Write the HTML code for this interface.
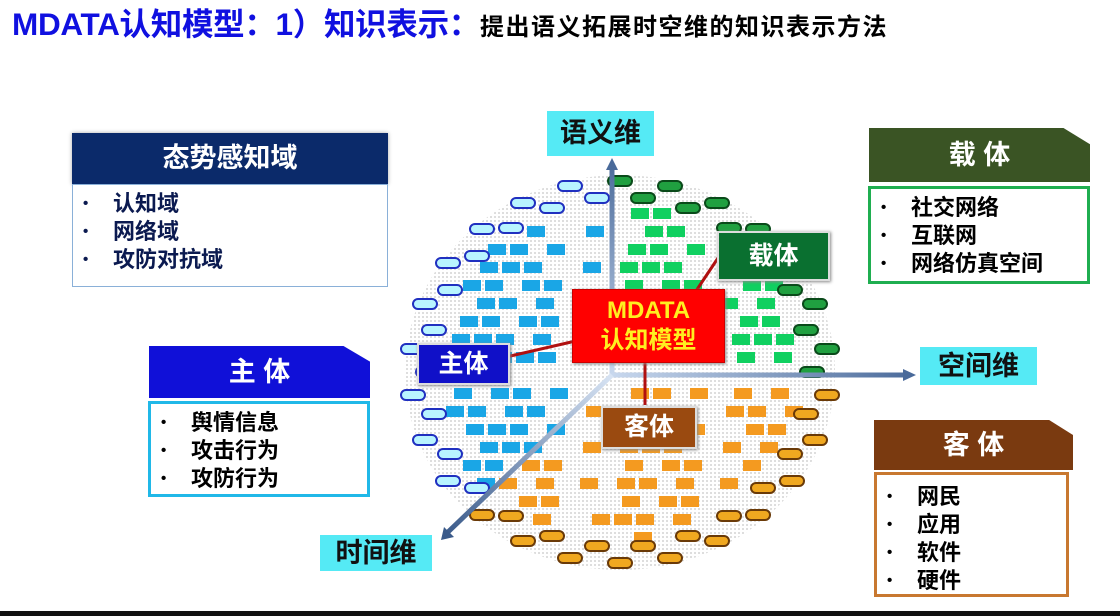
<!DOCTYPE html>
<html><head><meta charset="utf-8"><style>
*{margin:0;padding:0;box-sizing:border-box}
body{width:1120px;height:616px;background:#fff;position:relative;overflow:hidden;font-family:"Liberation Sans","Noto Sans CJK SC",sans-serif;font-weight:bold}
.a{position:absolute}
.title{left:12px;top:4px;font-size:31.5px;line-height:40px;color:#1010e0;white-space:nowrap;letter-spacing:-0.3px}
.title span{font-size:24px;color:#000;letter-spacing:1.5px}
.hd{color:#fff;font-size:27px;text-align:center;box-shadow:0 0 4px #aaa}
.bd{background:#fff;font-size:22px;color:#000;padding:5px 0 0 10px;line-height:28px}
.bd div::before{content:"•";display:inline-block;width:30px;font-size:15px;vertical-align:top}
.lbl{background:#55eaf5;color:#111;font-size:27px;text-align:center}
.tag{color:#fff;font-size:25px;text-align:center;border:2px solid #ddd;box-shadow:1px 1px 3px #888}
</style></head><body>
<div class="a title">MDATA认知模型：1）知识表示：<span>提出语义拓展时空维的知识表示方法</span></div>

<div class="a" style="left:405px;top:175px;width:430px;height:395px;border-radius:50%;background:radial-gradient(#ccc 1px,transparent 1.2px) 0 0/4px 4px;opacity:.7"></div>
<div id="bricks"></div>

<svg class="a" style="left:0;top:0" width="1120" height="616">
<defs><linearGradient id="g1" gradientUnits="userSpaceOnUse" x1="0" y1="375" x2="0" y2="160"><stop offset="0" stop-color="#c8d8ee"/><stop offset="1" stop-color="#4a6a9a"/></linearGradient>
<linearGradient id="g2" gradientUnits="userSpaceOnUse" x1="612" y1="0" x2="915" y2="0"><stop offset="0" stop-color="#c8d8ee"/><stop offset="1" stop-color="#4a6a9a"/></linearGradient>
<linearGradient id="g3" gradientUnits="userSpaceOnUse" x1="612" y1="375" x2="445" y2="535"><stop offset="0" stop-color="#d8e4f4"/><stop offset="1" stop-color="#3a5a8a"/></linearGradient></defs>
<line x1="612" y1="375" x2="612" y2="168" stroke="url(#g1)" stroke-width="5"/>
<polygon points="606,170 618,170 612,158" fill="#4a6a9a"/>
<line x1="612" y1="375" x2="905" y2="375" stroke="url(#g2)" stroke-width="5"/>
<polygon points="903,369 903,381 916,375" fill="#4a6a9a"/>
<line x1="612" y1="375" x2="448" y2="532" stroke="url(#g3)" stroke-width="5"/>
<polygon points="441,540 444,527 454,537" fill="#3a5a8a"/>
<line x1="506" y1="357" x2="580" y2="340" stroke="#b01010" stroke-width="3"/>
<line x1="690" y1="300" x2="720" y2="255" stroke="#b01010" stroke-width="3"/>
<line x1="645" y1="362" x2="645" y2="405" stroke="#b01010" stroke-width="3"/>
</svg>

<div class="a lbl" style="left:547px;top:111px;width:107px;height:45px;line-height:45px">语义维</div>
<div class="a lbl" style="left:920px;top:347px;width:117px;height:38px;line-height:38px">空间维</div>
<div class="a lbl" style="left:320px;top:535px;width:112px;height:36px;line-height:36px">时间维</div>

<div class="a" style="left:572px;top:289px;width:153px;height:74px;background:#f00;border:1px solid #c00;color:#ffef20;font-size:24px;text-align:center;line-height:30px;padding-top:6px;box-shadow:1px 1px 3px #888">MDATA<br>认知模型</div>
<div class="a tag" style="left:417px;top:343px;width:93px;height:42px;line-height:38px;background:#1010c8">主体</div>
<div class="a tag" style="left:717px;top:231px;width:113px;height:50px;line-height:46px;background:#0a7030">载体</div>
<div class="a tag" style="left:601px;top:406px;width:96px;height:43px;line-height:39px;background:#9a4a10">客体</div>

<div class="a hd" style="left:72px;top:133px;width:316px;height:51px;line-height:51px;background:#0b2a6a">态势感知域</div>
<div class="a bd" style="left:72px;top:184px;width:316px;height:103px;border:1px solid #8ab0d8;color:#0b1a50"><div>认知域</div><div>网络域</div><div>攻防对抗域</div></div>

<div class="a hd" style="left:869px;top:128px;width:221px;height:54px;line-height:54px;background:#3a5424;clip-path:polygon(0 0,88% 0,100% 30%,100% 100%,0 100%)">载 体</div>
<div class="a bd" style="left:868px;top:186px;width:222px;height:98px;border:3px solid #1fae50"><div>社交网络</div><div>互联网</div><div>网络仿真空间</div></div>

<div class="a hd" style="left:149px;top:346px;width:221px;height:52px;line-height:52px;background:#1010d8;clip-path:polygon(0 0,88% 0,100% 30%,100% 100%,0 100%)">主 体</div>
<div class="a bd" style="left:148px;top:401px;width:222px;height:96px;border:3px solid #20b8e8"><div>舆情信息</div><div>攻击行为</div><div>攻防行为</div></div>

<div class="a hd" style="left:874px;top:420px;width:199px;height:50px;line-height:50px;background:#7a3a10;clip-path:polygon(0 0,88% 0,100% 30%,100% 100%,0 100%)">客 体</div>
<div class="a bd" style="left:874px;top:472px;width:195px;height:125px;border:3px solid #c87830;padding-top:8px"><div>网民</div><div>应用</div><div>软件</div><div>硬件</div></div>

<div class="a" style="left:0;top:611px;width:1120px;height:5px;background:#111"></div>

<script>
var cx=620,cy=372,rx=213,ry=195,h='';
function q(x,y){var dx=x-612,dy=y-375;if(dx>0&&dy<0)return 'g';if(dy>0&&dx>-dy)return 'o';return 'b';}
var col={b:'#1aa6e6',g:'#10d060',o:'#f49a20'};
var pc={b:['#b8f4ff','#2030c0'],g:['#20a040','#0a4a1a'],o:['#f0a820','#6a3a08']};
for(var r=0;r<21;r++){var y=190+r*18;for(var c=0;c<16;c++){var x=412+c*28+(r%2)*14+((r*7+c*3)%5)*3;
var nx=(x+9-cx)/rx,ny=(y+5-cy)/ry,d=nx*nx+ny*ny;if(d>0.74)continue;if((r*5+c*3)%5==0)continue;
if(Math.abs(x+9-612)<10||Math.abs(y+5-375)<9)continue;var k=q(x+9,y+5);
h+='<div class="a" style="left:'+x+'px;top:'+y+'px;width:18px;height:11px;background:'+col[k]+'"></div>';}}
for(var i=0;i<52;i++){var t=i/52*2*Math.PI;var rr=(i%2)?0.98:0.9;var x=cx+Math.cos(t)*rx*rr,y=cy+Math.sin(t)*ry*rr;var k=q(x,y);
if(k=='b'&&Math.cos(t)>0.1)continue;
h+='<div class="a" style="left:'+(x-13)+'px;top:'+(y-6)+'px;width:26px;height:12px;border-radius:6px;background:'+pc[k][0]+';border:2px solid '+pc[k][1]+'"></div>';}
document.getElementById('bricks').innerHTML=h;
</script>
</body></html>
